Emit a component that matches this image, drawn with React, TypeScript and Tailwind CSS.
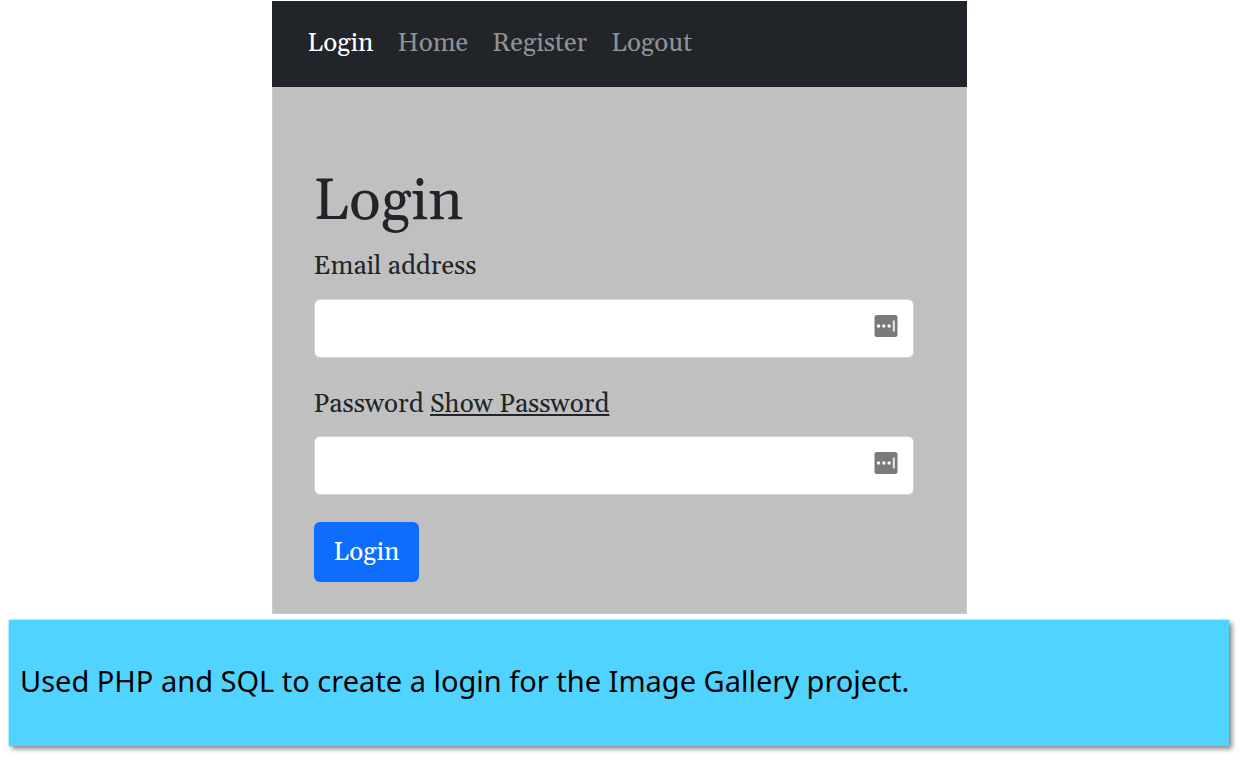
const Icon = () => (
  <svg viewBox="0 0 24 24" className="h-6 w-6 shrink-0" aria-hidden="true">
    <rect x="0.5" y="1" width="23" height="22" rx="2.5" fill="#7a7a7a" />
    <circle cx="4.5" cy="12" r="1.7" fill="#fff" />
    <circle cx="9.8" cy="12" r="1.7" fill="#fff" />
    <circle cx="15.1" cy="12" r="1.7" fill="#fff" />
    <rect x="18.8" y="6.5" width="2" height="11" fill="#e8e8e8" />
  </svg>
);

function Field({ id, type }: { id: string; type: string }) {
  return (
    <div className="flex h-[59px] items-center rounded-md border border-[#d2d4d6] bg-white pr-[15px] pb-[6px]">
      <input id={id} type={type} className="h-full min-w-0 flex-1 bg-transparent px-4 outline-none" />
      <Icon />
    </div>
  );
}

export default function App() {
  return (
    <main className="pt-px pr-[19px] pb-4 pl-[9px]">
      <section className="mx-auto w-full max-w-[695px] bg-[#c0c0c0] font-['Gelasio','Georgia','Noto_Serif','Liberation_Serif',serif] text-[26px] text-[#212529]">
        <nav className="flex h-[86px] items-center gap-6 bg-[#212529] px-9 pb-[2px] text-[#909294]">
          <a href="#login" className="text-white">Login</a>
          <a href="#home">Home</a>
          <a href="#register">Register</a>
          <a href="#logout">Logout</a>
        </nav>
        <form className="border-x border-b border-[#cccccc] pt-[79px] pr-[52px] pb-[31px] pl-[41px]">
          <h1 className="text-[59px] leading-[72px]">Login</h1>
          <label htmlFor="email" className="mt-[5px] mb-2 block leading-[48px]">Email address</label>
          <Field id="email" type="email" />
          <div className="mt-[27px] mb-[11px] leading-10">
            <label htmlFor="password">Password</label> <a href="#show" className="underline">Show Password</a>
          </div>
          <Field id="password" type="password" />
          <button type="button" className="mt-[27px] block h-[60px] rounded-md bg-[#0d6efd] px-5 text-white">Login</button>
        </form>
      </section>
      <p className="mt-[6px] bg-[#50d3ff] px-[11px] pt-10 pb-11 font-['Noto_Sans',sans-serif] text-[29px] leading-[42px] text-black shadow-[3px_3px_5px_#888,0_0_2px_#50d3ff]">
        Used PHP and SQL to create a login for the Image Gallery project.
      </p>
    </main>
  );
}
